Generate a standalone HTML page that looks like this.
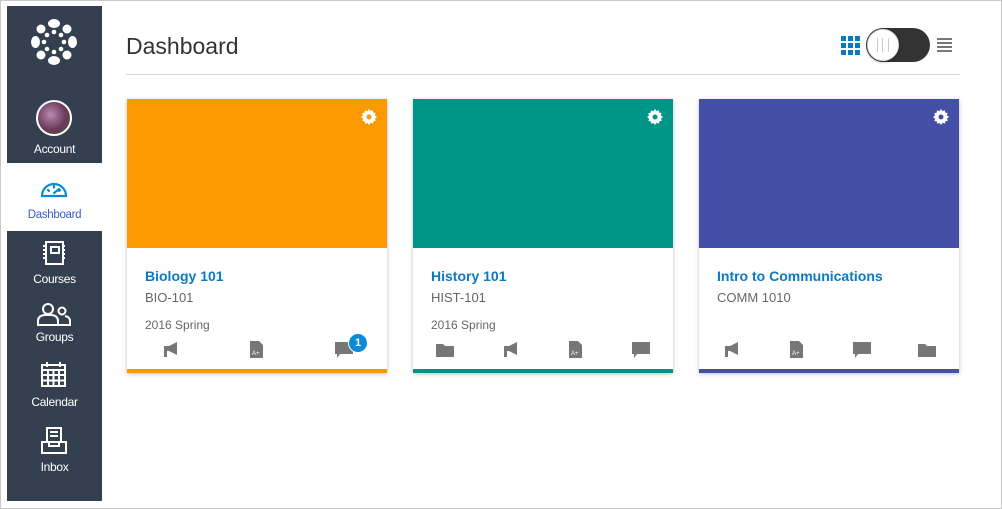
<!DOCTYPE html>
<html><head><meta charset="utf-8"><style>
body{margin:0;width:1002px;height:509px;background:#fff;font-family:"Liberation Sans",sans-serif;position:relative;overflow:hidden}
.frame{position:absolute;left:0;top:0;width:1000px;height:507px;border:1px solid #c8c8c8}
.a{position:absolute}
.dark{background:#34404f}
.nl{position:absolute;width:95px;left:7px;text-align:center;color:#fff;font-size:12px;letter-spacing:-0.3px}
.card{position:absolute;top:99px;width:260px;height:274px;background:#fff;box-shadow:0 1px 4px rgba(0,0,0,.25)}
.card .top{height:149px}
.card .bar{position:absolute;left:0;bottom:0;width:100%;height:4px}
.card .t{position:absolute;left:18px;top:169px;color:#0a7ac4;font-weight:bold;font-size:14px}
.card .c{position:absolute;left:18px;top:191px;color:#666;font-size:13px}
.card .s{position:absolute;left:18px;top:219px;color:#666;font-size:12px}
.gear{position:absolute;right:10px;top:10px}
.ic{position:absolute;top:243px}
</style></head><body>
<div class="frame"></div>
<div class="a dark" style="left:7px;top:6px;width:95px;height:157px"></div>
<div class="a dark" style="left:7px;top:231px;width:95px;height:270px"></div>
<svg class="a" style="left:31px;top:19px" width="46" height="46" viewBox="0 0 46 46" fill="#fff">
<ellipse cx="23" cy="4.5" rx="6" ry="4.5"/><ellipse cx="23" cy="41.5" rx="6" ry="4.5"/><ellipse cx="4.5" cy="23" rx="4.5" ry="6"/><ellipse cx="41.5" cy="23" rx="4.5" ry="6"/>
<circle cx="10" cy="10" r="4.5"/><circle cx="36" cy="10" r="4.5"/><circle cx="10" cy="36" r="4.5"/><circle cx="36" cy="36" r="4.5"/>
<circle cx="23" cy="13" r="2.3"/><circle cx="23" cy="33" r="2.3"/><circle cx="13" cy="23" r="2.3"/><circle cx="33" cy="23" r="2.3"/>
<circle cx="16" cy="16" r="2.3"/><circle cx="30" cy="16" r="2.3"/><circle cx="16" cy="30" r="2.3"/><circle cx="30" cy="30" r="2.3"/></svg>
<div class="a" style="left:36px;top:100px;width:32px;height:32px;border-radius:50%;border:2px solid #fff;background:radial-gradient(circle at 40% 40%,#b98ab0,#6a3a5a 55%,#4c5a2a)"></div>
<div class="nl" style="top:142px">Account</div>
<svg class="a" style="left:40px;top:178px" width="28" height="20" viewBox="0 0 28 20" fill="none" stroke="#0a8ad8" stroke-width="2.2"><path d="M2 18 A12 12 0 0 1 26 18 Z"/><path d="M8 12 l1 1 M14 8v1.5 M20 12l-1 1 M14 15 l5-4" stroke-linecap="round"/></svg>
<div class="nl" style="top:209px;color:#3c5ac4;font-size:11.5px">Dashboard</div>
<svg class="a" style="left:41px;top:241px" width="26" height="24" viewBox="0 0 26 24" fill="none" stroke="#fff" stroke-width="2"><rect x="5" y="1" width="17" height="22"/><rect x="10" y="6" width="8" height="6"/><path d="M2 5h4M2 9h4M2 13h4M2 17h4M21 5h3M21 9h3M21 13h3M21 17h3"/></svg>
<div class="nl" style="top:272px">Courses</div>
<svg class="a" style="left:37px;top:302px" width="34" height="24" viewBox="0 0 34 24" fill="none" stroke="#fff" stroke-width="2"><circle cx="11" cy="7" r="5"/><path d="M1 23v-4q0-5 6-6h8q6 1 6 6v4z"/><circle cx="25" cy="9" r="3.5"/><path d="M21 23h12v-4q0-4-5-5"/></svg>
<div class="nl" style="top:330px">Groups</div>
<svg class="a" style="left:40px;top:361px" width="27" height="27" viewBox="0 0 27 27" fill="none" stroke="#fff" stroke-width="2"><rect x="2" y="4" width="23" height="21"/><path d="M2 9h23M8 9v16M13.5 9v16M19 9v16M2 14h23M2 19.5h23M7 1v5M20 1v5"/></svg>
<div class="nl" style="top:395px">Calendar</div>
<svg class="a" style="left:41px;top:427px" width="26" height="27" viewBox="0 0 26 27" fill="none" stroke="#fff" stroke-width="2"><rect x="6" y="1" width="14" height="14"/><path d="M9 5h8M9 9h8M1 15v11h24V15h-7v4H8v-4z"/></svg>
<div class="nl" style="top:460px">Inbox</div>

<div class="a" style="left:126px;top:33px;font-size:23px;color:#333">Dashboard</div>
<div class="a" style="left:126px;top:74px;width:834px;height:1px;background:#d4d4d4"></div>
<svg class="a" style="left:841px;top:36px" width="19" height="19" viewBox="0 0 19 19" fill="#0a7ac4"><rect x="0" y="0" width="5" height="5"/><rect x="7" y="0" width="5" height="5"/><rect x="14" y="0" width="5" height="5"/><rect x="0" y="7" width="5" height="5"/><rect x="7" y="7" width="5" height="5"/><rect x="14" y="7" width="5" height="5"/><rect x="0" y="14" width="5" height="5"/><rect x="7" y="14" width="5" height="5"/><rect x="14" y="14" width="5" height="5"/></svg>
<div class="a" style="left:866px;top:28px;width:64px;height:34px;border-radius:17px;background:#333"></div>
<div class="a" style="left:867px;top:29px;width:30px;height:30px;border-radius:50%;background:#fff;border:1px solid #ddd;box-shadow:0 1px 3px rgba(0,0,0,.3)"><div style="position:absolute;left:9px;top:8px;width:10px;height:14px;border-left:1px solid #ccc;border-right:1px solid #ccc"></div><div style="position:absolute;left:14px;top:8px;width:1px;height:14px;background:#ccc"></div></div>
<svg class="a" style="left:937px;top:38px" width="15" height="14" viewBox="0 0 15 14" fill="#777"><rect y="0" width="15" height="2"/><rect y="4" width="15" height="2"/><rect y="8" width="15" height="2"/><rect y="12" width="15" height="2"/></svg>

<!-- card 1 -->
<div class="card" style="left:127px"><div class="top" style="background:#fb9a00"></div>
<svg class="gear" width="16" height="16" viewBox="0 0 16 16"><path fill="#fff" d="M8 0l1.5 2 2.3-.8.4 2.4 2.4.4-.8 2.3L16 8l-2 1.5.8 2.3-2.4.4-.4 2.4-2.3-.8L8 16l-1.5-2-2.3.8-.4-2.4-2.4-.4.8-2.3L0 8l2-1.5-.8-2.3 2.4-.4.4-2.4 2.3.8z"/><circle cx="8" cy="8" r="2.5" fill="#fb9a00"/></svg>
<div class="t">Biology 101</div><div class="c">BIO-101</div><div class="s">2016 Spring</div>
<svg class="ic" style="left:36px" width="16" height="15" viewBox="0 0 16 15" fill="#777"><path d="M1 4h5l8-4v13l-8-4H4v6H1z"/></svg>
<svg class="ic" style="left:123px;top:242px" width="13" height="17" viewBox="0 0 13 17" fill="#777"><path d="M0 0h9l4 4v13H0z"/><text x="2" y="14" font-size="6" fill="#fff" font-family="Liberation Sans">A+</text></svg>
<svg class="ic" style="left:208px" width="18" height="17" viewBox="0 0 18 17" fill="#777"><path d="M0 0h18v12H5l-3 4v-4H0z"/></svg>
<div class="a" style="left:221px;top:234px;width:18px;height:18px;border-radius:50%;background:#0a8ad8;color:#fff;font-size:11px;font-weight:bold;text-align:center;line-height:18px;border:1px solid #fff">1</div>
<div class="bar" style="background:#fb9a00"></div></div>

<!-- card 2 -->
<div class="card" style="left:413px"><div class="top" style="background:#009687"></div>
<svg class="gear" width="16" height="16" viewBox="0 0 16 16"><path fill="#fff" d="M8 0l1.5 2 2.3-.8.4 2.4 2.4.4-.8 2.3L16 8l-2 1.5.8 2.3-2.4.4-.4 2.4-2.3-.8L8 16l-1.5-2-2.3.8-.4-2.4-2.4-.4.8-2.3L0 8l2-1.5-.8-2.3 2.4-.4.4-2.4 2.3.8z"/><circle cx="8" cy="8" r="2.5" fill="#009687"/></svg>
<div class="t">History 101</div><div class="c">HIST-101</div><div class="s">2016 Spring</div>
<svg class="ic" style="left:23px;top:245px" width="18" height="13" viewBox="0 0 18 13" fill="#777"><path d="M0 0h7l2 2h9v11H0z"/></svg>
<svg class="ic" style="left:90px" width="16" height="15" viewBox="0 0 16 15" fill="#777"><path d="M1 4h5l8-4v13l-8-4H4v6H1z"/></svg>
<svg class="ic" style="left:156px;top:242px" width="13" height="17" viewBox="0 0 13 17" fill="#777"><path d="M0 0h9l4 4v13H0z"/><text x="2" y="14" font-size="6" fill="#fff" font-family="Liberation Sans">A+</text></svg>
<svg class="ic" style="left:219px" width="18" height="17" viewBox="0 0 18 17" fill="#777"><path d="M0 0h18v12H5l-3 4v-4H0z"/></svg>
<div class="bar" style="background:#009687"></div></div>

<!-- card 3 -->
<div class="card" style="left:699px"><div class="top" style="background:#4450a6"></div>
<svg class="gear" width="16" height="16" viewBox="0 0 16 16"><path fill="#fff" d="M8 0l1.5 2 2.3-.8.4 2.4 2.4.4-.8 2.3L16 8l-2 1.5.8 2.3-2.4.4-.4 2.4-2.3-.8L8 16l-1.5-2-2.3.8-.4-2.4-2.4-.4.8-2.3L0 8l2-1.5-.8-2.3 2.4-.4.4-2.4 2.3.8z"/><circle cx="8" cy="8" r="2.5" fill="#4450a6"/></svg>
<div class="t">Intro to Communications</div><div class="c">COMM 1010</div>
<svg class="ic" style="left:25px" width="16" height="15" viewBox="0 0 16 15" fill="#777"><path d="M1 4h5l8-4v13l-8-4H4v6H1z"/></svg>
<svg class="ic" style="left:91px;top:242px" width="13" height="17" viewBox="0 0 13 17" fill="#777"><path d="M0 0h9l4 4v13H0z"/><text x="2" y="14" font-size="6" fill="#fff" font-family="Liberation Sans">A+</text></svg>
<svg class="ic" style="left:154px" width="18" height="17" viewBox="0 0 18 17" fill="#777"><path d="M0 0h18v12H5l-3 4v-4H0z"/></svg>
<svg class="ic" style="left:219px;top:245px" width="18" height="13" viewBox="0 0 18 13" fill="#777"><path d="M0 0h7l2 2h9v11H0z"/></svg>
<div class="bar" style="background:#4450a6"></div></div>
</body></html>
